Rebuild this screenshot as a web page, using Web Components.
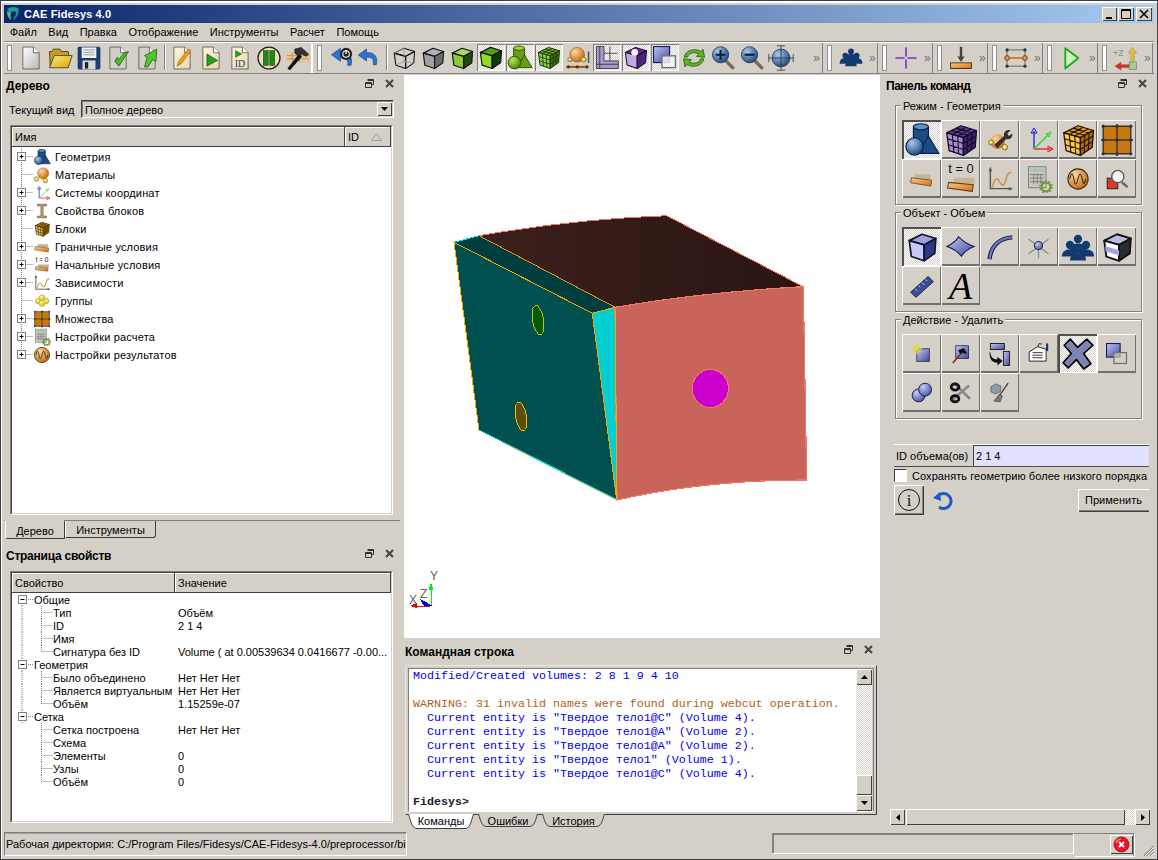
<!DOCTYPE html>
<html lang="ru">
<head>
<meta charset="utf-8">
<title>CAE Fidesys 4.0</title>
<style>
  html, body { margin: 0; width: 1158px; height: 860px; overflow: hidden; background: #d4d0c8; }
  body { font: 11px "Liberation Sans", Arial, sans-serif; color: #000; }
  .left-col, .center-col, .right-col { display: flex; flex-direction: column; min-width: 0; }
  .right-col { padding-left: 1px; }
  .form-spacer { flex: 1; }
</style>
</head>
<body>
<cae-window>
  <cae-titlebar></cae-titlebar>
  <cae-menubar></cae-menubar>
  <cae-toolbars></cae-toolbars>
  <cae-workspace>
    <div class="left-col">
      <cae-dock heading="Дерево">
        <cae-combo label="Текущий вид" value="Полное дерево"></cae-combo>
        <cae-tree></cae-tree>
        <cae-doc-tabs></cae-doc-tabs>
      </cae-dock>
      <cae-dock heading="Страница свойств" top="4" track="-.25">
        <cae-props></cae-props>
      </cae-dock>
    </div>
    <div class="center-col">
      <cae-viewport></cae-viewport>
      <cae-dock heading="Командная строка" close-inset="6" title-left="1" top="2">
        <cae-console></cae-console>
      </cae-dock>
    </div>
    <div class="right-col">
      <cae-dock heading="Панель команд" fill title-left="1" close-inset="6" track="-.5">
        <cae-group heading="Режим - Геометрия" active="0" icons="geomB meshP toolS axes meshO gridO bound t0 chart calc wave lens"></cae-group>
        <cae-group heading="Объект - Объем" active="0" icons="cubeB surf curve vertex people slice ruler letterA"></cae-group>
        <cae-group heading="Действие - Удалить" active="4" icons="newV hamV trans propsI bigX copyS unionC sciss broom"></cae-group>
        <cae-form></cae-form>
        <div class="form-spacer"></div>
        <cae-hscroll></cae-hscroll>
      </cae-dock>
    </div>
  </cae-workspace>
  <cae-statusbar></cae-statusbar>
</cae-window>

<script>
  // --- icons (viewBox 32x32) ---------------------------------------------
  const grad = (id, a, b) =>
    `<linearGradient id="${id}" x1="0" y1="0" x2="1" y2="1"><stop offset="0" stop-color="${a}"/><stop offset="1" stop-color="${b}"/></linearGradient>`;
  const rad = (id, a, b) =>
    `<radialGradient id="${id}" cx=".35" cy=".3" r=".8"><stop offset="0" stop-color="${a}"/><stop offset="1" stop-color="${b}"/></radialGradient>`;

  const DEFS = "<defs>" +
    grad("gDoc", "#ffffff", "#b8b8b0") + grad("gCream", "#fff4dc", "#ecd6ac") +
    grad("gY", "#ffe880", "#d8a800") + grad("gO", "#ffc880", "#d87010") +
    grad("gB", "#c4c8f4", "#3c4a9c") + grad("gN", "#3a78b0", "#0c2c5c") +
    rad("rO", "#ffd8a0", "#c06000") + rad("rB", "#a8c8ec", "#123c74") +
    rad("rG", "#b8e850", "#3c7c00") + rad("rV", "#c8ccf8", "#3c4a9c") +
    rad("rY", "#fff8a0", "#d8c000") + "</defs>";

  const doc = (fill) =>
    `<path d="M6 2.5h13l7 7v20H6z" fill="${fill}" stroke="#555"/><path d="M19 2.5v7h7" fill="#fff" stroke="#555"/>`;

  const cube = (top, left, right, stroke = "#111", w = 1.4, extra = "") =>
    `<g stroke="${stroke}" stroke-width="${w}" stroke-linejoin="round">
      <path d="M4 10 16 4 29 8 18 14z" fill="${top}"/>
      <path d="M4 10 18 14 18 29 6 25z" fill="${left}"/>
      <path d="M18 14 29 8 28 22 18 29z" fill="${right}"/></g>${extra}`;

  const mesh = (top, left, right, line) => cube(top, left, right, line, 1.1,
    `<path stroke="${line}" stroke-width=".9" fill="none" d="M8.7 11.3 10 26.3M13.3 12.7 14 27.7M4.7 15 18 19M5.3 20 18 24M21.7 12 21.3 26.7M25.3 10 24.7 24.3M18 19 28.7 12.7M18 24 28.3 17.3M8.7 11.3 20.3 5.3M13.3 12.7 24.7 6.7M8 8 21.7 12M12 6 25.3 10"/>`);

  const geom = (body, light, ball, stroke) =>
    `<g stroke="${stroke}" stroke-width="1"><path d="M9 5v14h13V5z" fill="${body}"/><ellipse cx="15.5" cy="5" rx="6.5" ry="2.6" fill="${light}"/>
     <path d="M22 13 31 28H13z" fill="${body}"/><circle cx="10" cy="22" r="7.5" fill="${ball}"/></g>`;

  const arrowBack = (c) =>
    `<path d="M27 25C30 15 24 8 16 9L14 9V4L3 12l11 8v-5l3 0c5 0 7 4 6 10z" fill="${c}" stroke="#0c3c80" stroke-width=".8"/>`;

  const person = (x, y, s = 1) =>
    `<circle cx="${x}" cy="${y}" r="${3.6 * s}"/><path d="M${x - 7 * s} ${y + 10 * s}c0-5 3-7 ${7 * s}-7s${7 * s} 2 ${7 * s} 7z"/>`;

  const ICONS = {
    new: doc("url(#gDoc)"),
    open: `<path d="M4 27 3 8h3l2-3h8l2 3h8l1 5" fill="#c89c18" stroke="#333"/><path d="M9 13h22l-5 15H3z" fill="url(#gY)" stroke="#333"/>`,
    save: `<rect x="2" y="2" width="28" height="28" rx="2" fill="#1c3d70"/><rect x="7" y="3" width="18" height="13" fill="#f4f4f4"/><path d="M9 6h14M9 9h14M9 12h14" stroke="#789"/><rect x="8" y="19" width="16" height="11" fill="#d8d8d8"/><rect x="11" y="21" width="4" height="8" fill="#222"/>`,
    docIn: doc("#d4d0c8") + `<path d="M12 20l5 6L29 8l-6 2-6 8-2-3z" fill="#4cc020" stroke="#185008" stroke-width=".9"/>`,
    docOut: doc("#d4d0c8") + `<path d="M13 27l3-12-3-2 15-8-1 15-4-2-6 9z" fill="#50c830" stroke="#185008" stroke-width=".9"/>`,
    edit: doc("url(#gCream)") + `<path d="M10 26 12 20 24 5l3 2L15 23z" fill="#e8a020" stroke="#8a5a10" stroke-width=".8"/>`,
    docPlay: doc("url(#gCream)") + `<path d="M11 11 24 19 11 26z" fill="#2c9c20" stroke="#104808" stroke-width=".8"/>`,
    docId: doc("url(#gCream)") + `<path d="M10 6l9 5-9 5z" fill="#2c9c20"/><text x="16" y="27" text-anchor="middle" font-family="Liberation Serif" font-size="12" fill="#1c3d70">ID</text>`,
    pause: `<circle cx="16" cy="16" r="13.5" fill="#f0dcb4" stroke="#222" stroke-width="1.6"/><rect x="9" y="7" width="6" height="18" fill="#1c8c10" stroke="#0c400c" stroke-width=".7"/><rect x="17" y="7" width="6" height="18" fill="#1c8c10" stroke="#0c400c" stroke-width=".7"/>`,
    hammer: `<rect x="2" y="9" width="28" height="12" fill="#e8c890"/><path d="M2 13h28M2 17h28M9 9v12M18 9v12" stroke="#a07840" stroke-width=".7"/><path d="M3 29 17 11l4 3L6 31z" fill="#111"/><path d="M12 5l8-2 9 8-3 3-5-3-4 3-5-4z" fill="#333" stroke="#000" stroke-width=".6"/>`,
    undoP: arrowBack("#2c74d0") + `<circle cx="21" cy="11" r="7.5" fill="#222"/><circle cx="21" cy="11" r="4" fill="none" stroke="#fff" stroke-width="1.3"/><path d="M21 6v5" stroke="#fff" stroke-width="1.6"/>`,
    undo: arrowBack("#2c74d0"),
    wire: cube("none", "none", "none", "#111", 1.3, `<path d="M4 10 16 4 16 20 6 25M16 20 28 22" stroke="#999" fill="none"/>`),
    grey: cube("#b0b0b0", "#a0a0a0", "#6c6c6c"),
    greenT: cube("#a8d860", "#8cc838", "#1c4c14"),
    greenS: cube("#5c9c10", "#8cdc20", "#0c3c08"),
    geomG: geom("#6c9c10", "#a4d030", "url(#rG)", "#1c4c08"),
    meshG: mesh("#74b020", "#90d040", "#3c7410", "#102c04"),
    pts: `<circle cx="15" cy="12" r="9" fill="url(#rO)" stroke="#804000" stroke-width=".6"/><circle cx="6" cy="18" r="2.6" fill="url(#rY)" stroke="#664"/><circle cx="23" cy="18" r="3" fill="url(#rY)" stroke="#664"/><path d="M2 27h26" stroke="#a05c10" stroke-width="2.6"/><path d="M4 27h.1M15 27h.1M27 27h.1" stroke="#5c3408" stroke-width="4" stroke-linecap="round"/><path d="M29 8v14" stroke="#555" stroke-width="2"/>`,
    frameP: `<path d="M4 3h9v17h17v9H4z" fill="#a898cc" stroke="#333"/><path d="M8 3v26M4 24h26M13 11H29M20 3V20" stroke="#333" fill="none"/>`,
    boxP: cube("#5c2c84", "#c4a8e0", "#4c2478", "#1c0c30", 1.2, `<circle cx="15" cy="10" r="4" fill="#f4f4f4"/>`),
    squares: `<rect x="3" y="3" width="19" height="19" fill="url(#gB)" stroke="#181c60" stroke-width="1.4"/><rect x="13" y="14" width="16" height="14" fill="#f4f4f4" fill-opacity=".85" stroke="#707070" stroke-width="1.6"/>`,
    sync: `<path d="M4 15C5 7 16 3 25 8l2-3 2 10-10-1 3-3C16 8 9 10 8 15z" fill="#58b820" stroke="#1c5008" stroke-width=".9"/><path d="M28 17c-1 8-12 12-21 7l-2 3-2-10 10 1-3 3c6 3 13 1 14-4z" fill="#58b820" stroke="#1c5008" stroke-width=".9"/>`,
    zoomIn: `<path d="M19 19l9 9" stroke="#7a6a58" stroke-width="4" stroke-linecap="round"/><circle cx="13" cy="12" r="10" fill="url(#rB)" stroke="#223c5c"/><path d="M7 12h12M13 6v12" stroke="#0c1c30" stroke-width="2.6"/>`,
    zoomOut: `<path d="M19 19l9 9" stroke="#7a6a58" stroke-width="4" stroke-linecap="round"/><circle cx="13" cy="12" r="10" fill="url(#rB)" stroke="#223c5c"/><path d="M7 12h12" stroke="#0c1c30" stroke-width="2.6"/>`,
    fit: `<circle cx="16" cy="16" r="11" fill="url(#rB)" stroke="#223c5c"/><path d="M1 16h30M16 1v30M1 11v10M31 11v10M11 1h10M11 31h10" stroke="#333"/>`,
    peopleN: `<g fill="#123a70">${person(9, 13)}${person(23, 13)}${person(16, 8)}${person(16, 16)}</g>`,
    cross: `<path d="M16 3v26M3 16h26" stroke="#7c30c8" stroke-width="2"/><path d="M14 16h4M16 14v4" stroke="#f0e8ff" stroke-width="1.4"/>`,
    load: `<path d="M14.5 2h3v12h3l-4.5 7-4.5-7h3z" fill="#444"/><rect x="3" y="22" width="26" height="7" fill="url(#gO)" stroke="#222"/>`,
    nodes: `<path d="M5 6h22v20H5z" fill="none" stroke="#555"/><path d="M5 16h22" stroke="#d87010" stroke-width="2"/><g fill="#333"><circle cx="5" cy="6" r="2"/><circle cx="27" cy="6" r="2"/><circle cx="5" cy="26" r="2"/><circle cx="27" cy="26" r="2"/></g><circle cx="5" cy="16" r="3" fill="#f09030" stroke="#633"/><circle cx="27" cy="16" r="3" fill="#f09030" stroke="#633"/>`,
    playG: `<path d="M9 4 25 16 9 29Z" fill="#d4ecc8" stroke="#18a818" stroke-width="2.2" stroke-linejoin="round"/>`,
    axisZ: `<text x="0" y="13" font-family="Liberation Sans" font-weight="bold" font-size="11" fill="#999">+Z</text><path d="M22 22V10h-3l5-7 5 7h-3v12z" fill="#f0c020" stroke="#888" stroke-width=".7"/><rect x="20" y="21" width="9" height="9" fill="#a0d090" stroke="#789" /><path d="M20 24H10v-3l-8 5 8 5v-3h10z" fill="#d83020" stroke="#888" stroke-width=".5"/>`,

    geomB: geom("#1c4c84", "#5c94c8", "url(#rB)", "#08204c"),
    meshP: mesh("#5c3c8c", "#a88cd0", "#3c2468", "#120828"),
    toolS: `<circle cx="13" cy="18" r="9" fill="url(#rO)"/><circle cx="5" cy="19" r="3" fill="url(#rY)" stroke="#664"/><circle cx="22" cy="25" r="3.4" fill="url(#rY)" stroke="#664"/><path d="M9 22 21 11c-1-5 3-8 8-7l-4 4 2 3 4-3c1 5-3 8-8 7L13 26z" fill="#33302c"/>`,
    axes: `<g fill="none" stroke-width="1.3"><path d="M11 25V7" stroke="#1c1cf0"/><path d="M11 25h19" stroke="#f01c1c"/><path d="M11 25 26 10" stroke="#18e018"/></g><path d="M11 4l-3 5h6z" fill="none" stroke="#1c1cf0"/><path d="M30 25l-5-3v6z" fill="none" stroke="#f01c1c"/><path d="M28 8l-5 2 3 3z" fill="none" stroke="#18e018"/>`,
    meshO: mesh("#e09c10", "#f8c848", "#b06c00", "#201000"),
    gridO: `<rect x="3" y="3" width="26" height="26" fill="#c87810"/><path d="M3 3h26v26H3zM16 1v30M1 16h30" fill="none" stroke="#333" stroke-width="1.3"/><g fill="#333"><circle cx="3" cy="3" r="1.5"/><circle cx="29" cy="3" r="1.5"/><circle cx="3" cy="29" r="1.5"/><circle cx="29" cy="29" r="1.5"/><circle cx="3" cy="16" r="1.5"/><circle cx="29" cy="16" r="1.5"/><circle cx="16" cy="3" r="1.5"/><circle cx="16" cy="29" r="1.5"/><circle cx="16" cy="16" r="1.5"/></g>`,
    bound: `<path d="M8 11h19v6H8z" fill="#c8b49c"/><path d="M4 15 28 18l-1 7-24-4z" fill="url(#gO)" stroke="#5c4020" stroke-width=".9"/>`,
    t0: `<text x="16" y="11" text-anchor="middle" font-family="Liberation Sans" font-size="11.5" fill="#111">t = 0</text><path d="M9 15h19v5H9z" fill="#c8b49c"/><path d="M5 19 27 21l-1 6-22-3z" fill="url(#gO)" stroke="#5c4020" stroke-width=".9"/>`,
    chart: `<path d="M5 3v24h24" fill="none" stroke="#555" stroke-width="1.6"/><path d="M3 7l2-5 2 5zM26 25l5 2-5 2z" fill="#555"/><path d="M7 26c3-12 6-12 9-6s6 2 7-4 3-7 6-8" fill="none" stroke="#d89040" stroke-width="1.8"/>`,
    calc: `<rect x="4" y="2" width="20" height="24" fill="#c8c8c0" stroke="#777"/><rect x="6" y="4" width="16" height="4" fill="#a8c8a0"/><path d="M6 11h16M6 15h16M6 19h16M10 10v12M14 10v12M18 10v12" stroke="#777"/><circle cx="24" cy="25" r="5" fill="none" stroke="#6c9c30" stroke-width="2.4"/><circle cx="24" cy="25" r="7" fill="none" stroke="#6c9c30" stroke-width="2" stroke-dasharray="2 2.4"/>`,
    wave: `<circle cx="16" cy="16" r="13.5" fill="url(#rO)" stroke="#3c2c18" stroke-width="1.4"/><path d="M5 16c2-9 4-9 5.500 0s3.500 9 5.500 0 3.500-9 5.500 0 3 7 5 0" fill="none" stroke="#3c2c18" stroke-width="1.5"/>`,
    lens: `<rect x="4" y="15" width="13" height="13" fill="#d83c28" stroke="#222" stroke-width="1.2"/><path d="M22 20l7 6" stroke="#666" stroke-width="3"/><circle cx="17" cy="13" r="7.5" fill="#f0f4f8" stroke="#555" stroke-width="1.6"/>`,
    cubeB: cube("#9aa0e0", "#c4c8fc", "#2c3a84", "#11142c", 1.6),
    surf: `<path d="M2 16C8 13 12 10 14 6c4 4 10 8 16 10-5 2-10 5-13 10-4-5-9-8-15-10z" fill="url(#gB)" stroke="#181c50" stroke-width="1.2"/>`,
    curve: `<path d="M4 30C6 14 16 6 30 5" fill="none" stroke="#20264c" stroke-width="5"/><path d="M4 30C6 14 16 6 30 5" fill="none" stroke="#6c78c0" stroke-width="2.4"/>`,
    vertex: `<path d="M16 16 5 8M16 16 27 8M16 16 5 24M16 16 27 24M16 16v13" stroke="#888" stroke-width="1.3"/><circle cx="16" cy="15" r="4.500" fill="url(#rV)" stroke="#123"/>`,
    people: `<g fill="#123a70">${person(8, 14, 1.15)}${person(24, 14, 1.15)}${person(16, 8, 1.15)}${person(16, 18, 1.15)}</g>`,
    slice: cube("#b8bce8", "#fff", "#2c2c30", "#111", 1.8, `<path d="M4.800 15 18 19 18 24 5.300 20z" fill="#a0a8e0"/>`),
    ruler: `<path d="M3 23 23 5l6 6L9 29z" fill="#3c4c9c" stroke="#222"/><path d="M8 19l3 3M12 15.500l2 2M16 12l3 3M20 8.500l2 2" stroke="#c8ccf0"/>`,
    newV: `<rect x="10" y="10" width="16" height="16" fill="url(#gB)" stroke="#181c50"/><path d="M10 3v14M3 10h14M5 5l10 10M15 5 5 15" stroke="#e8d820" stroke-width="1.4"/>`,
    hamV: `<rect x="9" y="5" width="17" height="17" fill="url(#gB)" stroke="#181c50"/><path d="M5 28 18 13" stroke="#902020" stroke-width="2"/><path d="M12 11l8-3 4 7-3 1-3-2-3 2z" fill="#111"/>`,
    trans: `<rect x="5" y="4" width="16" height="7" fill="url(#gB)" stroke="#111"/><rect x="20" y="13" width="7" height="16" fill="url(#gB)" stroke="#111"/><path d="M5 14c0 6 4 8 8 8v-3l6 5-6 5v-3c-6 0-9-4-9-12z" fill="#111"/>`,
    propsI: `<path d="M5 14 15 8l10 3v14H5z" fill="#fff" stroke="#111"/><path d="M9 15h12M9 18h12M9 21h12" stroke="#111"/><path d="M15 8l2-4 3 1" fill="none" stroke="#111"/><rect x="25" y="4" width="2.500" height="9" fill="#1c2c80"/>`,
    bigX: `<path d="M9 2 16 10 25 2 31 8 22 16 29 26 22 31 15 22 7 30 2 25 10 16 3 8z" fill="#7c84b4" stroke="#000" stroke-width="1.6" stroke-linejoin="round"/>`,
    copyS: `<rect x="5" y="5" width="15" height="15" fill="url(#gB)" stroke="#181c50" stroke-width="1.2"/><rect x="13" y="15" width="14" height="12" fill="#d4d0c8" fill-opacity=".7" stroke="#707070" stroke-width="1.4"/>`,
    unionC: `<circle cx="12" cy="20" r="9" fill="url(#rV)" stroke="#181c50" stroke-width="1.3"/><circle cx="21" cy="12" r="9" fill="url(#rV)" stroke="#181c50" stroke-width="1.3"/>`,
    sciss: `<path d="M8 4 28 24M5 26 27 7" stroke="#888" stroke-width="3.200"/><ellipse cx="9" cy="9" rx="5" ry="4" fill="none" stroke="#111" stroke-width="3.400"/><ellipse cx="9" cy="24" rx="5" ry="4" fill="none" stroke="#111" stroke-width="3.400"/>`,
    broom: `<path d="M4 8 11 4l7 3-1 8-7 3-6-3z" fill="#8c9ca8" stroke="#555"/><path d="M28 3 16 20" stroke="#333" stroke-width="1.6"/><path d="M16 18l4 3-3 8-9-1z" fill="#777" stroke="#555"/>`,
    beam: `<path d="M8 4h16v3h-6v18h6v3H8v-3h6V7H8z" fill="#c8a070" stroke="#5c4830"/>`,
    mat: `<circle cx="18" cy="13" r="10" fill="url(#rO)" stroke="#804000" stroke-width=".6"/><circle cx="6" cy="23" r="4" fill="url(#rY)" stroke="#664"/><circle cx="22" cy="26" r="4" fill="url(#rY)" stroke="#664"/>`,
    yellow: `<g fill="url(#rY)" stroke="#998c20" stroke-width=".8"><circle cx="9" cy="16" r="5"/><circle cx="23" cy="16" r="5"/><circle cx="16" cy="10" r="5"/><circle cx="16" cy="20" r="5.500"/></g>`
  };

  // размеры кнопок панели команд
  const GROUP_SIZE = {
    geomB: 37, meshP: 38, toolS: 26, axes: 32, meshO: 38, gridO: 34,
    bound: 27, t0: 36, chart: 28, calc: 28, wave: 24, lens: 26,
    cubeB: 34, surf: 31, curve: 28, vertex: 29, people: 32, slice: 34, ruler: 28,
    newV: 25, hamV: 24, trans: 28, propsI: 27, bigX: 33, copyS: 29, unionC: 23, sciss: 25, broom: 23
  };

  const icon = (name, size) =>
    `<svg width="${size}" height="${size}" viewBox="0 0 32 32" style="display:block">${DEFS}${ICONS[name]}</svg>`;

  const CHECKER = "repeating-conic-gradient(#fff 0 25%, #d4d0c8 0 50%) 0 0 / 2px 2px";

  // --- base ----------------------------------------------------------------
  class Part extends HTMLElement {
    constructor() {
      super();
      this.attachShadow({ mode: "open" });
    }
    connectedCallback() {
      this.render();
    }
  }

  class CaeWindow extends Part {
    render() {
      this.shadowRoot.innerHTML = `
        <style>
          :host {
            display: flex;
            flex-direction: column;
            box-sizing: border-box;
            width: 1158px;
            height: 860px;
            padding: 4px 3px 2px 3px;
            border: 1px solid #404040;
            border-top-color: #2a3f70;
            background: #d4d0c8;
            box-shadow: inset 1px 2px 0 #fff;
          }
        </style>
        <slot></slot>
      `;
    }
  }

  class CaeTitlebar extends Part {
    render() {
      this.shadowRoot.innerHTML = `
        <style>
          :host {
            display: flex;
            align-items: center;
            height: 18px;
            padding: 0 2px 0 1px;
            background: linear-gradient(90deg, #0a246a, #a6caf0);
            color: #fff;
            font: bold 11px "Liberation Sans", sans-serif;
            letter-spacing: .1px;
          }
          .t { margin-left: 3px; flex: 1; }
          .b {
            width: 16px; height: 14px; margin-left: 2px;
            background: #d4d0c8;
            box-shadow: inset 1px 1px 0 #fff, inset -1px -1px 0 #404040;
          }
          .min { width: 15px; }
          svg { display: block; }
        </style>
        <svg width="16" height="16" viewBox="0 0 16 16">
          <path d="M2 3c4-3 9-3 12 0 0 5-2 9-6 12 1-4 3-6 3-9-3-1-5 0-6 2z" fill="#1c9c9c" stroke="#0c3c4c" stroke-width=".6"/>
          <path d="M2 5c0 4 1 7 4 9 0-3-1-5 0-7z" fill="#40c880"/>
        </svg>
        <span class="t">CAE Fidesys 4.0</span>
        <span class="b min"><svg width="15" height="14"><rect x="4" y="10" width="6" height="2" fill="#000"/></svg></span>
        <span class="b" style="margin-left:1px"><svg width="16" height="14"><path d="M3.500 2.500h9v9h-9zM3.500 3.500h9" fill="none" stroke="#000"/></svg></span>
        <span class="b"><svg width="16" height="14"><path d="M4 3l8 8M12 3l-8 8" stroke="#000" stroke-width="1.6"/></svg></span>
      `;
    }
  }

  class CaeMenubar extends Part {
    render() {
      const items = ["Файл", "Вид", "Правка", "Отображение", "Инструменты", "Расчет", "Помощь"];
      this.shadowRoot.innerHTML = `
        <style>
          :host {
            display: flex;
            align-items: center;
            height: 18px;
            padding-left: 0;
            font: 11px "Liberation Sans", sans-serif;
          }
          span { padding: 0 5.75px; }
          span:first-child { padding-left: 5px; }
        </style>
        ${items.map((t) => `<span>${t}</span>`).join("")}
      `;
    }
  }

  class ToolButton extends Part {
    render() {
      const w = this.getAttribute("w") || 29;
      this.shadowRoot.innerHTML = `
        <style>
          :host {
            display: flex;
            align-items: center;
            justify-content: center;
            width: ${w}px;
            height: 27px;
            flex: none;
          }
          .on {
            width: 28px; height: 27px;
            display: flex; align-items: center; justify-content: center;
            background: ${CHECKER};
            box-shadow: inset 1px 1px 0 #808080, inset -1px -1px 0 #fff;
          }
        </style>
        ${this.hasAttribute("on")
          ? `<div class="on">${icon(this.getAttribute("icon"), 27)}</div>`
          : icon(this.getAttribute("icon"), this.getAttribute("size") || 26)}
      `;
    }
  }

  class CaeToolbars extends Part {
    render() {
      const btns = (names) => names.split(" ").map((n) => {
        const on = n.endsWith("*");
        return `<tool-button icon="${n.replace("*", "")}"${on ? " on" : ""}></tool-button>`;
      }).join("");
      const mini = (name) => `
        <div class="sec mini"><i class="handle"></i>
          <span class="slot"><tool-button w="36" icon="${name}"></tool-button></span>
          <b class="more">»</b></div>`;
      this.shadowRoot.innerHTML = `
        <style>
          :host {
            display: flex;
            height: 33px;
            box-sizing: border-box;
            border-top: 1px solid #808080;
            border-bottom: 1px solid #808080;
          }
          .sec {
            display: flex;
            align-items: center;
            box-sizing: border-box;
            box-shadow: inset 0 1px 0 #fff, inset -1px 0 0 #808080;
            flex: none;
          }
          .s1 { width: 309px; padding-left: 3px; box-shadow: inset 0 1px 0 #fff, inset -2px 0 0 #fff; }
          .s2 { width: 510px; padding-left: 4px; }
          .mini { width: 55px; padding-left: 4px; }
          .handle {
            display: block; flex: none;
            width: 3px; height: 24px;
            background: #fff;
            border: 1px solid #909090;
            margin-right: 4px;
          }
          .s2 .handle { margin-right: 5px; }
          .sep {
            flex: none; width: 1px; height: 25px;
            background: #808080;
            border-right: 1px solid #fff;
            margin: 0 1px 0 3px;
          }
          .s2 .sep { margin: 0 1px 0 6px; }
          .more {
            margin-left: auto; margin-right: 3px;
            width: 12px;
            text-align: right;
            font: 12px "Liberation Sans", sans-serif;
            color: #707070;
          }
          .mini .slot { margin-left: -3px; }
        </style>
        <div class="sec s1"><i class="handle"></i>
          ${btns("new open save docIn docOut")}<i class="sep"></i>${btns("edit docPlay docId pause hammer")}
        </div>
        <div class="sec s2"><i class="handle"></i>
          <tool-button icon="undoP"></tool-button>
          <tool-button icon="undo" w="24"></tool-button><i class="sep"></i>
          ${btns("wire grey greenT greenS* geomG* meshG* pts frameP* boxP* squares* sync zoomIn zoomOut fit")}
          <b class="more">»</b>
        </div>
        ${mini("peopleN")}${mini("cross")}${mini("load")}${mini("nodes")}${mini("playG")}${mini("axisZ")}
      `;
    }
  }

  class CaeWorkspace extends Part {
    render() {
      this.shadowRoot.innerHTML = `
        <style>
          :host {
            display: grid;
            grid-template-columns: 396px 476px 270px;
            column-gap: 4px;
            height: 756px;
          }
        </style>
        <slot></slot>
      `;
    }
  }

  class CaeDock extends Part {
    render() {
      const inset = this.getAttribute("close-inset") || 5;
      const top = this.getAttribute("top") || 0;
      const left = this.getAttribute("title-left") || 2;
      const track = this.getAttribute("track") || 0;
      this.shadowRoot.innerHTML = `
        <style>
          :host {
            display: flex;
            flex-direction: column;
            padding-top: ${top}px;
            ${this.hasAttribute("fill") ? "flex: 1;" : ""}
            min-height: 0;
          }
          .head {
            display: flex;
            align-items: center;
            flex: none;
            height: 23px;
            padding: 0 ${inset}px 0 ${left}px;
            font: bold 12px "Liberation Sans", sans-serif;
            letter-spacing: ${track}px;
          }
          .head span { flex: 1; }
          .head svg { display: block; margin-left: 8px; margin-top: -4px; }
          .head svg + svg { margin-left: 9px; }
          .body { flex: 1; display: flex; flex-direction: column; min-height: 0; }
        </style>
        <div class="head">
          <span>${this.getAttribute("heading")}</span>
          <svg width="11" height="11" viewBox="0 0 11 11"><path d="M3.500 1.500h6v5h-2M1.500 4.500h6v5h-6z M3.500 2.500h6M1.500 5.500h6" fill="none" stroke="#333"/></svg>
          <svg width="11" height="11" viewBox="0 0 11 11"><path d="M2 2l7 7M9 2l-7 7" stroke="#444" stroke-width="2"/></svg>
        </div>
        <div class="body"><slot></slot></div>
      `;
    }
  }

  class CaeCombo extends Part {
    render() {
      this.shadowRoot.innerHTML = `
        <style>
          :host {
            display: flex;
            align-items: center;
            height: 18px;
            margin: 3px 6px 0 5px;
          }
          .l { width: 72px; flex: none; padding-top: 1px; }
          .box {
            flex: 1;
            display: flex;
            align-items: center;
            box-sizing: border-box;
            height: 18px;
            padding: 0 1px 0 3px;
            border: 1px solid;
            border-color: #404040 #fff #fff #404040;
            box-shadow: inset 1px 1px 0 #808080;
          }
          .box span { flex: 1; padding-top: 1px; }
          .arr {
            width: 15px; height: 14px;
            display: flex; align-items: center; justify-content: center;
            background: #d4d0c8;
            box-shadow: inset 1px 1px 0 #fff, inset -1px -1px 0 #404040;
          }
        </style>
        <span class="l">${this.getAttribute("label")}</span>
        <div class="box">
          <span>${this.getAttribute("value")}</span>
          <div class="arr"><svg width="7" height="4"><path d="M0 0h7L3.500 4z" fill="#000"/></svg></div>
        </div>
      `;
    }
  }

  const SUNKEN = `
    border: 1px solid;
    border-color: #808080 #fff #fff #808080;
  `;
  const SUNKEN_IN = `
    border: 1px solid;
    border-color: #404040 #d4d0c8 #d4d0c8 #404040;
  `;
  const dots = 'stroke="#808080" stroke-dasharray="1 1"';

  class CaeTree extends Part {
    render() {
      const rows = [
        ["geomB", "Геометрия", 1], ["mat", "Материалы", 0], ["axes", "Системы координат", 1],
        ["beam", "Свойства блоков", 1], ["meshO", "Блоки", 0], ["bound", "Граничные условия", 1],
        ["t0", "Начальные условия", 1], ["chart", "Зависимости", 1], ["yellow", "Группы", 0],
        ["gridO", "Множества", 1], ["calc", "Настройки расчета", 1], ["wave", "Настройки результатов", 1]
      ];
      const gutter = (plus, last) => `
        <svg width="21" height="18" viewBox="0 0 21 18">
          <line x1="9.500" y1="0" x2="9.500" y2="${last ? 9 : 18}" ${dots}/>
          <line x1="9.500" y1="8.500" x2="21" y2="8.500" ${dots}/>
          ${plus ? `<rect x="5.500" y="4.500" width="8" height="8" fill="#fff" stroke="#808080"/><path d="M7.500 8.500h4M9.500 6.500v4" stroke="#000"/>` : ""}
        </svg>`;
      this.shadowRoot.innerHTML = `
        <style>
          :host {
            display: block;
            box-sizing: border-box;
            width: 383px;
            height: 390px;
            margin: 7px 0 0 6px;
            ${SUNKEN}
          }
          .in { ${SUNKEN_IN} box-sizing: border-box; height: 100%; background: #fff; }
          .hd { display: flex; height: 19px; background: #d4d0c8; border-bottom: 1px solid #404040; }
          .hd div {
            display: flex; align-items: center;
            box-sizing: border-box;
            padding-left: 3px;
            box-shadow: inset 1px 1px 0 #fff;
            border-right: 1px solid #404040;
          }
          .c1 { width: 333px; }
          .c2 { flex: 1; justify-content: space-between; padding-right: 8px; }
          .rows { padding-top: 1px; }
          .r { display: flex; align-items: center; height: 18px; }
          .r svg { flex: none; }
          .r span { margin-left: 4px; letter-spacing: .17px; }
        </style>
        <div class="in">
          <div class="hd">
            <div class="c1">Имя</div>
            <div class="c2">ID<svg width="11" height="8"><path d="M.5 7.500 5.500 .5l5 7z" fill="none" stroke="#a0a0a0"/></svg></div>
          </div>
          <div class="rows">
            ${rows.map((r, i) => `<div class="r">${gutter(r[2], i === rows.length - 1)}${icon(r[0], 18)}<span>${r[1]}</span></div>`).join("")}
          </div>
        </div>
      `;
    }
  }

  class CaeDocTabs extends Part {
    render() {
      this.shadowRoot.innerHTML = `
        <style>
          :host {
            display: flex;
            align-items: flex-start;
            height: 20px;
            margin-top: 5px;
            padding-left: 1px;
            box-sizing: border-box;
            background: linear-gradient(#808080, #808080) 0 0 / 100% 1px no-repeat;
          }
          .t { display: flex; align-items: center; justify-content: center; box-sizing: border-box; }
          .a {
            width: 60px; height: 19px;
            padding-top: 2px;
            border-left: 1px solid #fff;
            border-top: 1px solid #d4d0c8;
            border-bottom: 1px solid #404040;
            border-right: 1px solid #404040;
            border-bottom-left-radius: 3px;
            background: #d4d0c8;
          }
          .i {
            width: 91px; height: 17px;
            padding-top: 1px;
            border-right: 1px solid #404040;
            border-bottom: 1px solid #404040;
            border-left: 1px solid #fff;
            border-bottom-right-radius: 3px;
            margin-top: 1px;
          }
        </style>
        <div class="t a">Дерево</div>
        <div class="t i">Инструменты</div>
      `;
    }
  }

  class CaeProps extends Part {
    render() {
      const data = [
        ["Общие", [["Тип", "Объём"], ["ID", "2 1 4"], ["Имя", ""], ["Сигнатура без ID", "Volume ( at 0.00539634 0.0416677 -0.00..."]]],
        ["Геометрия", [["Было объединено", "Нет Нет Нет"], ["Является виртуальным", "Нет Нет Нет"], ["Объём", "1.15259e-07"]]],
        ["Сетка", [["Сетка построена", "Нет Нет Нет"], ["Схема", ""], ["Элементы", "0"], ["Узлы", "0"], ["Объём", "0"]]]
      ];
      let html = "";
      data.forEach(([name, kids], g) => {
        const lastGroup = g === data.length - 1;
        html += `<div class="r"><svg width="22" height="13" viewBox="0 0 22 13">
            ${g > 0 ? `<line x1="10" y1="0" x2="10" y2="3" ${dots}/>` : ""}
            <line x1="10" y1="10" x2="10" y2="13" ${dots}/>
            <line x1="14" y1="6.500" x2="21" y2="6.500" ${dots}/>
            <rect x="6.500" y="2.500" width="8" height="8" fill="#fff" stroke="#808080"/>
            <path d="M8.500 6.500h4" stroke="#000"/>
          </svg><span class="k">${name}</span></div>`;
        kids.forEach(([k, v], i) => {
          const last = i === kids.length - 1;
          html += `<div class="r"><svg width="41" height="13" viewBox="0 0 41 13">
              ${lastGroup ? "" : `<line x1="10" y1="0" x2="10" y2="13" ${dots}/>`}
              <line x1="29.500" y1="0" x2="29.500" y2="${last ? 7 : 13}" ${dots}/>
              <line x1="29.500" y1="6.500" x2="41" y2="6.500" ${dots}/>
            </svg><span class="k2">${k}</span><span class="v">${v}</span></div>`;
        });
      });
      this.shadowRoot.innerHTML = `
        <style>
          :host {
            display: block;
            box-sizing: border-box;
            width: 383px;
            height: 252px;
            margin: 4px 0 0 6px;
            ${SUNKEN}
          }
          .in { ${SUNKEN_IN} box-sizing: border-box; height: 100%; background: #fff; }
          .hd { display: flex; height: 19px; background: #d4d0c8; border-bottom: 1px solid #404040; }
          .hd div {
            display: flex; align-items: center;
            box-sizing: border-box;
            padding-left: 3px;
            box-shadow: inset 1px 1px 0 #fff;
            border-right: 1px solid #404040;
          }
          .c1 { width: 163px; }
          .c2 { flex: 1; }
          .r { display: flex; align-items: center; height: 13px; }
          .r svg { flex: none; }
          .k2 { width: 125px; flex: none; white-space: nowrap; }
        </style>
        <div class="in">
          <div class="hd"><div class="c1">Свойство</div><div class="c2">Значение</div></div>
          <div class="rows">${html}</div>
        </div>
      `;
    }
  }

  class CaeViewport extends Part {
    render() {
      this.shadowRoot.innerHTML = `
        <style>
          :host {
            display: block;
            height: 563px;
            margin-top: 1px;
            flex: none;
            background: #fff;
          }
          svg { display: block; }
          text { font-family: "Liberation Sans", sans-serif; font-size: 12px; fill: #606060; }
        </style>
        <svg width="476" height="563" viewBox="404 75 476 563" shape-rendering="crispEdges">
          <defs>
            <linearGradient id="topFace" x1="0" y1="0" x2="1" y2="0">
              <stop offset="0" stop-color="#3c201c"/><stop offset="1" stop-color="#2a1513"/>
            </linearGradient>
          </defs>
          <!-- top face -->
          <path d="M479 235.700Q575 219 666.700 215.700L803.300 286.700Q705 292 615 307.300Z" fill="url(#topFace)" stroke="#f07868"/>
          <!-- dark band and left face -->
          <path d="M454 242.300 479 235.700 615 307.300 592.300 313.300Z" fill="#003e40" stroke="#ffa500" stroke-width=".8"/>
          <path d="M454 242.300 592.300 313.300 616.700 500 479 430Z" fill="#005050" stroke="#ffa500"/>
          <path d="M454 242.300 479 235.700M479 430 616 499" stroke="#00e0e0" fill="none"/>
          <!-- cyan strip -->
          <path d="M592.300 313.300 615 307.300 616.700 500Z" fill="#00d0d4" stroke="#ffa500"/>
          <!-- right face -->
          <path d="M615 307.300Q705 292 803.300 286.700L806.700 480Q705 480 617 500Z" fill="#c8645a" stroke="#f07868" stroke-width="1.200"/>
          <path d="M615 307.300 617 500" stroke="#ffa500" fill="none"/>
          <!-- holes -->
          <ellipse cx="710.300" cy="388.500" rx="18" ry="19" fill="#cc00cc" stroke="#f07868"/>
          <ellipse cx="538" cy="320" rx="5.500" ry="15" transform="rotate(-10 538 320)" fill="#005c00" stroke="#c8c000"/>
          <ellipse cx="521" cy="416.500" rx="5.500" ry="14.500" transform="rotate(-10 521 416.500)" fill="#5c5000" stroke="#f0c000"/>
          <!-- axes triad -->
          <path d="M431 606V589" stroke="#00f000" stroke-width="1"/>
          <path d="M431 583l-2.500 7h5z" fill="#00f000"/>
          <path d="M430 606H416" stroke="#f00000" stroke-width="1"/>
          <path d="M410 606l7-3v5z" fill="#f00000"/>
          <path d="M430 605l-9-5 3 5z" fill="#0000e0" stroke="#0000e0"/>
          <text x="430" y="580">Y</text>
          <text x="420" y="598">Z</text>
          <text x="409" y="604">X</text>
        </svg>
      `;
    }
  }

  class CaeConsole extends Part {
    render() {
      const b = (t) => `<span class="b">${t}</span>`;
      const text = [
        b("Modified/Created volumes: 2 8 1 9 4 10"), "",
        `<span class="w">WARNING: 31 invalid names were found during webcut operation.</span>`,
        b('  Current entity is "Твердое тело1@C" (Volume 4).'),
        b('  Current entity is "Твердое тело1@A" (Volume 2).'),
        b('  Current entity is "Твердое тело1@A" (Volume 2).'),
        b('  Current entity is "Твердое тело1" (Volume 1).'),
        b('  Current entity is "Твердое тело1@C" (Volume 4).'), "",
        `<span class="p">Fidesys&gt;</span>`
      ].join("\n");
      this.shadowRoot.innerHTML = `
        <style>
          :host {
            display: block;
            box-sizing: border-box;
            width: 472px;
            height: 150px;
            margin: 2px 0 0 1px;
            padding: 2px;
            border: 1px solid;
            border-color: #e8e8e0 #404040 #404040 #e8e8e0;
            flex: none;
          }
          .in {
            display: flex;
            box-sizing: border-box;
            height: 100%;
            border: 1px solid;
            border-color: #808080 #808080 #fff #808080;
            padding-right: 1px;
          }
          pre {
            flex: 1;
            margin: 0;
            padding: 0 0 0 4px;
            background: #fff;
            overflow: hidden;
            font: 11.67px/14px "Liberation Mono", "Noto Sans CJK SC", monospace;
          }
          .b { color: #0000f0; }
          .w { color: #b0601c; }
          .p { color: #222; font-weight: bold; }
          .sb { width: 16px; display: flex; flex-direction: column; flex: none; }
          .btn {
            height: 16px; flex: none;
            display: flex; align-items: center; justify-content: center;
            background: #d4d0c8;
            box-shadow: inset 1px 1px 0 #fff, inset -1px -1px 0 #404040;
          }
          .track { flex: 1; background: ${CHECKER}; }
          .thumb { height: 20px; }
        </style>
        <div class="in">
          <pre>${text}</pre>
          <div class="sb">
            <div class="btn"><svg width="7" height="4"><path d="M3.500 0 7 4H0z"/></svg></div>
            <div class="track"></div>
            <div class="btn thumb"></div>
            <div class="btn"><svg width="7" height="4"><path d="M0 0h7L3.500 4z"/></svg></div>
          </div>
        </div>
        <cmd-tabs></cmd-tabs>
      `;
    }
  }

  class CmdTabs extends Part {
    render() {
      const tabs = [["Команды", 66, 1], ["Ошибки", 60, 0], ["История", 63, 0]];
      const tab = ([label, w, on]) => {
        const h = on ? 15 : 13;
        return `<div class="t" style="width:${w}px;height:${h}px">
          <svg width="${w}" height="${h}" viewBox="0 0 ${w} ${h}">
            <path d="M.5 0C3 8 4 ${h - .5} 9 ${h - .5}H${w - 9}C${w - 4} ${h - .5} ${w - 3} 8 ${w - .5} 0" fill="${on ? "#fff" : "#d4d0c8"}" stroke="#404040"/>
          </svg>
          <span>${label}</span>
        </div>`;
      };
      this.shadowRoot.innerHTML = `
        <style>
          :host {
            display: flex;
            align-items: flex-start;
            position: absolute;
            margin: 2px 0 0 0;
          }
          .t { position: relative; display: flex; justify-content: center; flex: none; margin-right: 4px; }
          .t svg { position: absolute; left: 0; top: 0; }
          .t span { position: relative; line-height: 14px; }
        </style>
        ${tabs.map(tab).join("")}
      `;
    }
  }

  class CaeGroup extends Part {
    render() {
      const active = +this.getAttribute("active");
      const names = this.getAttribute("icons").split(" ");
      const cell = (n) => n === "letterA"
        ? `<span class="glyph">A</span>`
        : icon(n, GROUP_SIZE[n] || 32);
      this.shadowRoot.innerHTML = `
        <style>
          :host {
            display: block;
            position: relative;
            box-sizing: border-box;
            width: 247px;
            height: 100px;
            margin: 7px 0 0 10px;
            padding: 14px 0 0 6px;
            border: 1px solid #808080;
            box-shadow: 1px 1px 0 #fff, inset 1px 1px 0 #fff;
          }
          :host(:first-of-type) { margin-top: 8px; }
          .cap {
            position: absolute; left: 5px; top: -6px;
            padding: 0 2px;
            background: #d4d0c8;
          }
          .grid { display: grid; grid-template-columns: repeat(6, 39px); grid-auto-rows: 39px; }
          .b {
            display: flex; align-items: center; justify-content: center;
            box-shadow: inset 1px 1px 0 #fff, inset -1px -1px 0 #707070, inset 0 -2px 0 #707070;
          }
          .b.on {
            background: ${CHECKER};
            box-shadow: inset 2px 2px 0 #505050, inset -1px -1px 0 #fff;
          }
          .glyph { font: italic 38px/38px "Liberation Serif", serif; }
        </style>
        <span class="cap">${this.getAttribute("heading")}</span>
        <div class="grid">
          ${names.map((n, i) => `<div class="b${i === active ? " on" : ""}">${cell(n)}</div>`).join("")}
        </div>
      `;
    }
  }

  class CaeForm extends Part {
    render() {
      this.shadowRoot.innerHTML = `
        <style>
          :host {
            display: block;
            width: 255px;
            margin: 25px 0 0 9px;
          }
          .id {
            display: flex;
            height: 23px;
            box-sizing: border-box;
            border-top: 1px solid #fff;
            border-bottom: 1px solid #505050;
          }
          .id span { display: flex; align-items: center; width: 79px; padding-left: 2px; box-sizing: border-box; flex: none; }
          .id div {
            flex: 1;
            display: flex; align-items: center;
            padding-left: 3px;
            background: #e0e0ff;
            box-shadow: inset 1px 1px 0 #404040;
          }
          .chk { display: flex; align-items: center; height: 13px; margin-top: 2px; white-space: nowrap; letter-spacing: .07px; }
          .chk i {
            display: block; width: 11px; height: 11px;
            background: #fff; margin-right: 5px;
            border: 1px solid; border-color: #404040 #fff #fff #404040;
          }
          .row { display: flex; align-items: center; height: 30px; margin-top: 3px; }
          .info {
            width: 30px; height: 30px; flex: none;
            display: flex; align-items: center; justify-content: center;
            box-shadow: inset 1px 1px 0 #fff, inset -1px -1px 0 #404040, inset -2px -2px 0 #808080;
          }
          .undo { margin-left: 8px; }
          .apply {
            margin-left: auto;
            width: 71px; height: 23px;
            display: flex; align-items: center; justify-content: center;
            box-shadow: inset 1px 1px 0 #fff, inset 0 -1px 0 #404040, inset 0 -2px 0 #808080;
          }
        </style>
        <div class="id"><span>ID объема(ов)</span><div>2 1 4</div></div>
        <div class="chk"><i></i>Сохранять геометрию более низкого порядка</div>
        <div class="row">
          <div class="info"><svg width="24" height="24" viewBox="0 0 24 24"><circle cx="12" cy="12" r="10.500" fill="none" stroke="#111"/><text x="12" y="18" text-anchor="middle" font-family="Liberation Serif" font-size="17" fill="#111">i</text></svg></div>
          <svg class="undo" width="22" height="22" viewBox="0 0 22 22"><path d="M6 7a7.500 7.500 0 1 1 1 11" fill="none" stroke="#1c5cc0" stroke-width="3"/><path d="M1 9l8 3-1-9z" fill="#1c5cc0"/></svg>
          <div class="apply">Применить</div>
        </div>
      `;
    }
  }

  class CaeHscroll extends Part {
    render() {
      const b = (p) => `<div class="btn"><svg width="4" height="7"><path d="${p}"/></svg></div>`;
      this.shadowRoot.innerHTML = `
        <style>
          :host {
            display: flex;
            width: 260px;
            height: 16px;
            margin: 0 0 5px 5px;
            flex: none;
          }
          .btn {
            width: 15px; flex: none;
            display: flex; align-items: center; justify-content: center;
            box-shadow: inset 1px 1px 0 #fff, inset -1px -1px 0 #404040;
          }
          .thumb { flex: 1; margin-left: 1px; box-shadow: inset 1px 1px 0 #fff, inset -1px -1px 0 #404040; }
          .track { width: 10px; background: ${CHECKER}; }
        </style>
        ${b("M4 0v7L0 3.500z")}
        <div class="thumb"></div>
        <div class="track"></div>
        ${b("M0 0v7l4-3.500z")}
      `;
    }
  }

  class CaeStatusbar extends Part {
    render() {
      this.shadowRoot.innerHTML = `
        <style>
          :host {
            display: flex;
            align-items: flex-start;
            height: 26px;
            padding-top: 2px;
            box-sizing: border-box;
          }
          .path {
            box-sizing: border-box;
            width: 404px; height: 24px;
            display: flex; align-items: center;
            padding-left: 1px;
            white-space: nowrap;
            overflow: hidden;
            border: 1px solid;
            border-color: #808080 #fff #fff #808080;
            box-shadow: inset 0 1px 0 #a0a0a0;
          }
          .bar {
            box-sizing: border-box;
            width: 303px; height: 21px;
            margin: 1px 0 0 365px;
            border: 1px solid;
            border-color: #808080 #fff #fff #808080;
            box-shadow: inset 1px 1px 0 #808080;
          }
          .btnbox {
            box-sizing: border-box;
            width: 60px; height: 23px;
            padding: 1px 1px 0 36px;
            border-top: 1px solid #808080;
            border-right: 1px solid #808080;
            margin-top: 1px;
            box-shadow: 1px 1px 0 #fff;
          }
          .red {
            width: 23px; height: 19px;
            display: flex; align-items: center; justify-content: center;
            box-shadow: inset 1px 1px 0 #fff, inset -1px -1px 0 #404040;
          }
          .grip { margin: 13px 0 0 9px; display: block; }
        </style>
        <div class="path">Рабочая директория: C:/Program Files/Fidesys/CAE-Fidesys-4.0/preprocessor/bin</div>
        <div class="bar"></div>
        <div class="btnbox">
          <div class="red"><svg width="17" height="17" viewBox="0 0 17 17"><circle cx="8.500" cy="8.500" r="7.500" fill="#e8102c" stroke="#a02000"/><path d="M3 7a6 6 0 0 1 5-4" stroke="#ff9040" stroke-width="1.500" fill="none"/><path d="M6 6l5 5M11 6l-5 5" stroke="#fff" stroke-width="2"/></svg></div>
        </div>
        <svg class="grip" width="11" height="11" viewBox="0 0 11 11"><path d="M1 11 11 1M4 11l7-7M7 11l4-4" stroke="#808080" stroke-width="1.200"/><path d="M2 11 11 2M5 11l6-6M8 11l3-3" stroke="#fff"/></svg>
      `;
    }
  }

  customElements.define("cae-window", CaeWindow);
  customElements.define("cae-titlebar", CaeTitlebar);
  customElements.define("cae-menubar", CaeMenubar);
  customElements.define("tool-button", ToolButton);
  customElements.define("cae-toolbars", CaeToolbars);
  customElements.define("cae-workspace", CaeWorkspace);
  customElements.define("cae-dock", CaeDock);
  customElements.define("cae-combo", CaeCombo);
  customElements.define("cae-tree", CaeTree);
  customElements.define("cae-doc-tabs", CaeDocTabs);
  customElements.define("cae-props", CaeProps);
  customElements.define("cae-viewport", CaeViewport);
  customElements.define("cae-console", CaeConsole);
  customElements.define("cmd-tabs", CmdTabs);
  customElements.define("cae-group", CaeGroup);
  customElements.define("cae-form", CaeForm);
  customElements.define("cae-hscroll", CaeHscroll);
  customElements.define("cae-statusbar", CaeStatusbar);
</script>
</body>
</html>
